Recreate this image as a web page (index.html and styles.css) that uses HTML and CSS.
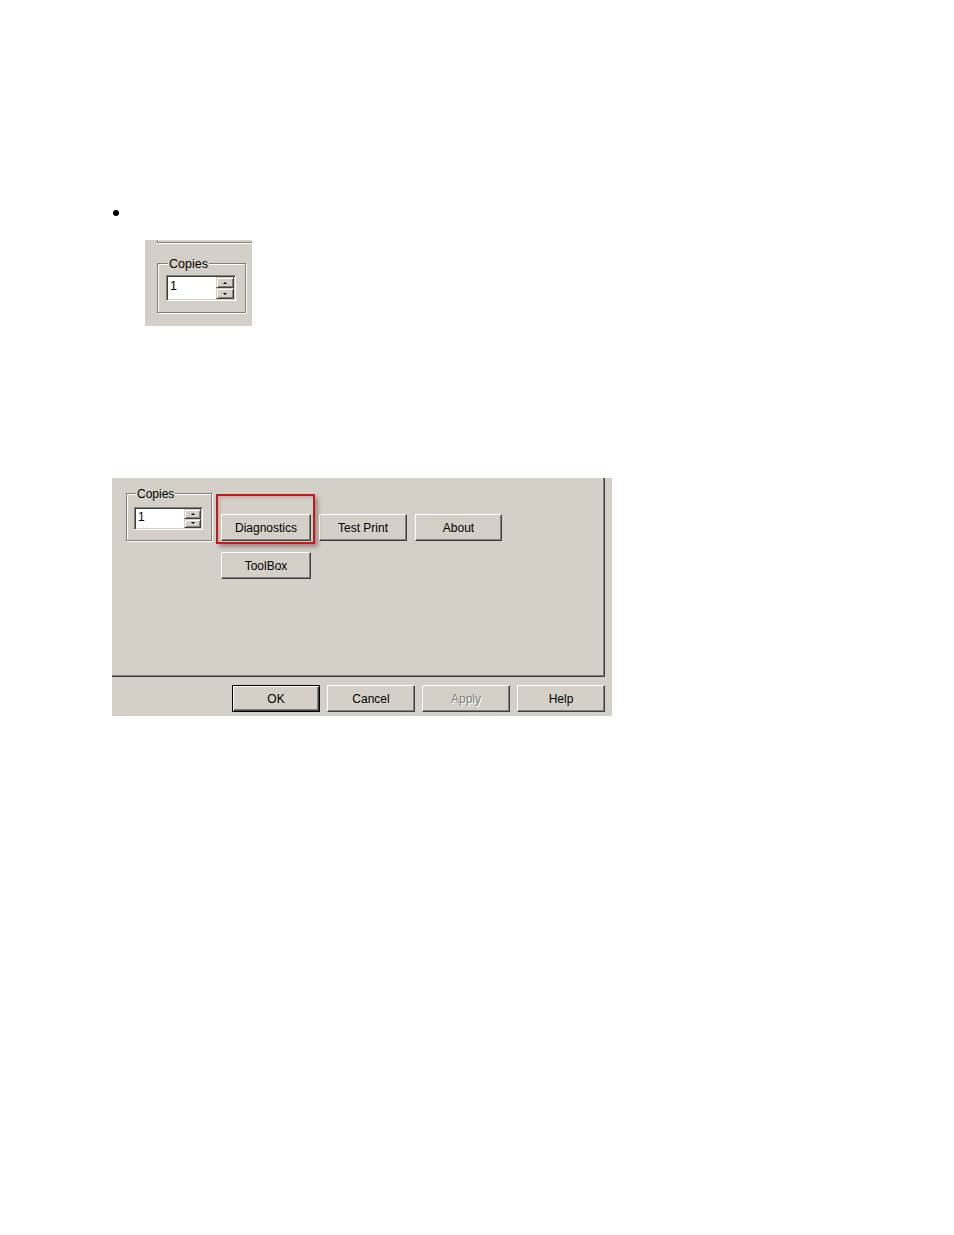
FILE: index.html
```html
<!DOCTYPE html>
<html>
<head>
<meta charset="utf-8">
<link rel="stylesheet" href="styles.css">
</head>
<body>
<div class="doc">
  <span class="bullet"></span>

  <div class="shot shot1">
    <div class="frag"></div>
    <div class="group group1">
      <span class="legend">Copies</span>
      <div class="field field1">
        <span class="text">1</span>
        <span class="spin">
          <span class="sb"><span class="up"></span></span>
          <span class="sb"><span class="down"></span></span>
        </span>
      </div>
    </div>
  </div>

  <div class="shot shot2">
    <div class="panel">
      <div class="group group2">
        <span class="legend">Copies</span>
        <div class="field field2">
          <span class="text">1</span>
          <span class="spin">
            <span class="sb"><span class="up"></span></span>
            <span class="sb"><span class="down"></span></span>
          </span>
        </div>
      </div>
      <div class="cmds">
        <div class="btn">Diagnostics</div>
        <div class="btn">Test Print</div>
        <div class="btn">About</div>
        <div class="btn">ToolBox</div>
      </div>
    </div>
    <div class="actions">
      <div class="btn default">OK</div>
      <div class="btn">Cancel</div>
      <div class="btn disabled">Apply</div>
      <div class="btn">Help</div>
    </div>
    <div class="highlight"></div>
  </div>
</div>
</body>
</html>
```

FILE: styles.css
```css
body {
  margin: 0;
  background: #fff;
  font-family: "Liberation Sans", Arial, sans-serif;
}

.doc {
  padding-top: 210px;
}

.bullet {
  display: block;
  width: 6px;
  height: 6px;
  border-radius: 50%;
  background: #000;
  margin-left: 113px;
}

.shot {
  background: #d4d0c8;
  color: #000;
  font-size: 12px;
}

.shot1 {
  margin: 24px 0 0 145px;
  width: 107px;
  height: 86px;
  font-size: 12.5px;
  overflow: hidden;
}

.frag {
  margin-left: 12px;
  height: 2px;
  border-left: 1px solid #808080;
  border-bottom: 1px solid #808080;
  box-shadow: inset 1px 0 0 #fff, 0 1px 0 #fff;
}

.group {
  box-sizing: border-box;
  border: 1px solid #808080;
  box-shadow: inset 1px 1px 0 #fff, 1px 1px 0 #fff;
}

.group1 {
  margin: 20px 0 0 12px;
  width: 89px;
  height: 50px;
  padding-left: 8px;
}

.group2 {
  flex: none;
  width: 86px;
  height: 48px;
  padding-left: 7px;
}

.legend {
  display: block;
  width: max-content;
  margin: -7px 0 0 2px;
  padding: 0 1px;
  line-height: 14px;
  background: #d4d0c8;
}

.field {
  box-sizing: border-box;
  display: flex;
  border: 1px solid;
  border-color: #808080 #fff #fff #808080;
  box-shadow: inset 1px 1px 0 #404040, inset -1px -1px 0 #d4d0c8;
  padding: 1px;
}

.field1 {
  margin-top: 4px;
  width: 70px;
  height: 26px;
}

.field2 {
  margin-top: 6px;
  width: 69px;
  height: 23px;
}

.text {
  flex: 1;
  background: #fff;
  padding-left: 2px;
  line-height: 14px;
  padding-top: 1px;
}

.field1 .text {
  padding-top: 2px;
}

.spin {
  display: flex;
  flex-direction: column;
  width: 17px;
}

.field1 .spin {
  width: 18px;
}

.sb {
  box-sizing: border-box;
  flex: 1;
  display: flex;
  align-items: center;
  justify-content: center;
  border: 1px solid;
  border-color: #d4d0c8 #404040 #404040 #d4d0c8;
  box-shadow: inset 1px 1px 0 #fff, inset -1px -1px 0 #808080;
  background: #d4d0c8;
}

.up,
.down {
  width: 0;
  height: 0;
  border-left: 2px solid transparent;
  border-right: 2px solid transparent;
}

.up {
  border-bottom: 2px solid #000;
}

.down {
  border-top: 2px solid #000;
}

.shot2 {
  position: relative;
  margin: 152px 0 0 112px;
  width: 500px;
  height: 238px;
}

.panel {
  box-sizing: border-box;
  display: flex;
  width: 493px;
  height: 199px;
  border-right: 1px solid #404040;
  border-bottom: 1px solid #404040;
  box-shadow: inset -1px -1px 0 #808080;
  padding: 15px 0 0 14px;
}

.cmds {
  display: grid;
  grid-template-columns: 90px 88px 87px;
  column-gap: 8px;
  row-gap: 11px;
  align-content: start;
  margin: 21px 0 0 9px;
}

.btn {
  box-sizing: border-box;
  width: 88px;
  height: 27px;
  display: flex;
  align-items: center;
  justify-content: center;
  border: 1px solid;
  border-color: #fff #404040 #404040 #fff;
  box-shadow: inset -1px -1px 0 #808080;
  background: #d4d0c8;
  font-size: 12px;
  line-height: 14px;
  color: #000;
}

.cmds .btn {
  width: auto;
}

.btn.default {
  border-color: #000;
  box-shadow: inset 1px 1px 0 #fff, inset -1px -1px 0 #404040, inset -2px -2px 0 #808080;
}

.btn.disabled {
  color: #808080;
  text-shadow: 1px 1px 0 #fff;
}

.actions {
  display: flex;
  gap: 7px;
  margin: 8px 0 0 120px;
}

.highlight {
  position: absolute;
  left: 104px;
  top: 16px;
  width: 99px;
  height: 50px;
  box-sizing: border-box;
  border: 2px solid #c8161d;
  box-shadow: 3px 3px 4px rgba(0, 0, 0, 0.3), inset 2px 2px 3px rgba(0, 0, 0, 0.12);
}
```
